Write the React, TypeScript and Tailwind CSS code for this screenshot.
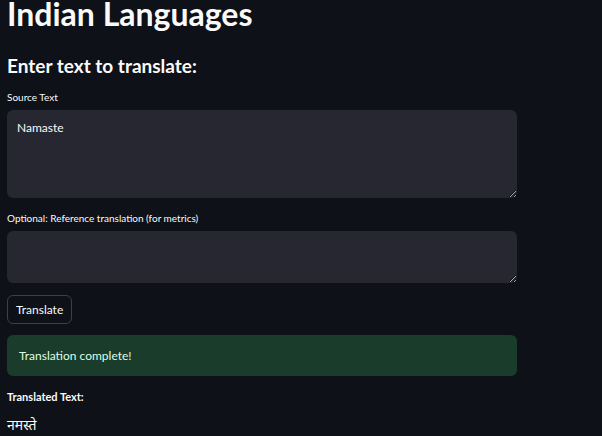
import React from "react";

export default function App() {
  return (
    <div
      className="min-h-[436px] w-full bg-[#0e1117] text-[#fafafa] overflow-hidden"
      style={{ fontFamily: 'Lato, "Noto Sans", sans-serif' }}
    >
      <div className="w-[510px] ml-[7px] flex flex-col">
        <h1 className="text-[32px] font-bold leading-[32px] mt-[-2px]">Indian Languages</h1>
        <h2 className="text-[19px] font-bold leading-none mt-[26px]">Enter text to translate:</h2>
        <label className="text-[10px] leading-none mt-[17px]">Source Text</label>
        <textarea
          className="mt-[8px] h-[88px] w-full rounded-[6px] bg-[#262730] text-[#fafafa] text-[12px] px-[10px] py-[9px] outline-none resize-y"
          defaultValue="Namaste"
        />
        <label className="text-[10px] leading-none mt-[15px]">Optional: Reference translation (for metrics)</label>
        <textarea className="mt-[8px] h-[52px] w-full rounded-[6px] bg-[#262730] text-[#fafafa] text-[12px] px-[10px] py-[9px] outline-none resize-y" />
        <div className="mt-[12px]">
          <button className="h-[29px] px-[8px] rounded-[6px] border border-[#3d3f4a] bg-[#0e1117] text-[12px] text-[#fafafa]">
            Translate
          </button>
        </div>
        <div className="mt-[11px] h-[41px] rounded-[6px] bg-[#193c2b] flex items-center px-[12px] text-[12px] text-[#dffde9]">
          Translation complete!
        </div>
        <div className="mt-[15px] text-[11px] font-bold leading-none">Translated Text:</div>
        <div className="mt-[16px] text-[14px] leading-none" style={{ fontFamily: '"Noto Sans", serif' }}>
          नमस्ते
        </div>
      </div>
    </div>
  );
}
